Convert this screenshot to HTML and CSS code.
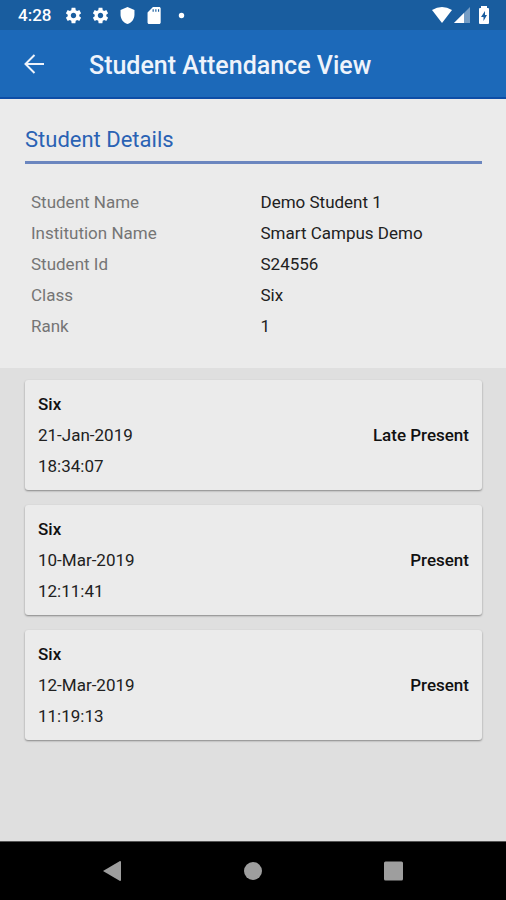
FILE: index.html
```html
<!DOCTYPE html>
<html lang="en">
<head>
<meta charset="utf-8">
<meta name="viewport" content="width=device-width, initial-scale=1">
<title>Student Attendance View</title>
<link rel="stylesheet" href="styles.css">
</head>
<body>
<div class="status-bar">
  <span class="clock">4:28</span>
  <svg class="status-icon" viewBox="1 1 22 22" aria-hidden="true"><use href="#gear"/></svg>
  <svg class="status-icon" viewBox="1 1 22 22" aria-hidden="true"><path id="gear" d="M19.43 12.98c.04-.32.07-.64.07-.98s-.03-.66-.07-.98l2.11-1.65c.19-.15.24-.42.12-.64l-2-3.46c-.12-.22-.39-.3-.61-.22l-2.49 1c-.52-.4-1.08-.73-1.69-.98l-.38-2.65C14.46 2.18 14.25 2 14 2h-4c-.25 0-.46.18-.49.42l-.38 2.65c-.61.25-1.17.59-1.69.98l-2.49-1c-.23-.09-.49 0-.61.22l-2 3.46c-.13.22-.07.49.12.64l2.11 1.65c-.04.32-.07.65-.07.98s.03.66.07.98l-2.11 1.65c-.19.15-.24.42-.12.64l2 3.46c.12.22.39.3.61.22l2.49-1c.52.4 1.08.73 1.69.98l.38 2.65c.03.24.24.42.49.42h4c.25 0 .46-.18.49-.42l.38-2.65c.61-.25 1.17-.59 1.69-.98l2.49 1c.23.09.49 0 .61-.22l2-3.46c.12-.22.07-.49-.12-.64l-2.11-1.65zM12 15.5c-1.930 0-3.500-1.570-3.500-3.500s1.570-3.500 3.500-3.500 3.500 1.570 3.500 3.500-1.570 3.500-3.500 3.500z"/></svg>
  <svg class="status-icon" viewBox="1 1 22 22" aria-hidden="true"><path d="M12 1 3 5v6c0 5.550 3.840 10.740 9 12 5.160-1.260 9-6.450 9-12V5z"/></svg>
  <svg class="status-icon" viewBox="1 1 22 22" aria-hidden="true"><path fill-rule="evenodd" d="M18 1h-8L3 8v13c0 1.100.9 2 2 2h13c1.100 0 2-.9 2-2V3c0-1.100-.9-2-2-2zM9.500 4v3h1.500V4zM13 4v3h1.500V4zM16.500 4v3H18V4z"/></svg>
  <svg class="status-icon" viewBox="1 1 22 22" aria-hidden="true"><circle cx="12" cy="12" r="3.500"/></svg>
  <div class="signals">
    <svg width="20" height="16" viewBox="0 0 20 16" aria-hidden="true"><path d="M0 3Q10-3 20 3L10 16Z"/></svg>
    <svg width="16" height="16" viewBox="0 0 16 16" aria-hidden="true"><path d="M0 16 16 0V16Z" opacity=".4"/><path d="M0 16 10 6V16Z"/></svg>
    <svg class="battery" width="12" height="18" viewBox="0 0 12 18" aria-hidden="true"><path fill-rule="evenodd" d="M3 2V0h6v2h1q1 0 1 1v14q0 1-1 1H2q-1 0-1-1V3q0-1 1-1zM7 5 3 11h2.500v4L9 9H7z"/></svg>
  </div>
</div>
<header class="app-bar">
  <button class="back" type="button" aria-label="Back">
    <svg width="20" height="20" viewBox="0 0 20 20" aria-hidden="true"><path d="M20 10H2M10.500 1 1.500 10l9 9"/></svg>
  </button>
  <h1>Student Attendance View</h1>
</header>
<main>
  <section class="details">
    <h2>Student Details</h2>
    <dl>
      <dt>Student Name</dt><dd>Demo Student 1</dd>
      <dt>Institution Name</dt><dd>Smart Campus Demo</dd>
      <dt>Student Id</dt><dd>S24556</dd>
      <dt>Class</dt><dd>Six</dd>
      <dt>Rank</dt><dd>1</dd>
    </dl>
  </section>
  <ul class="records">
    <li class="card">
      <div><h3>Six</h3><p>21-Jan-2019</p><p>18:34:07</p></div>
      <strong>Late Present</strong>
    </li>
    <li class="card">
      <div><h3>Six</h3><p>10-Mar-2019</p><p>12:11:41</p></div>
      <strong>Present</strong>
    </li>
    <li class="card">
      <div><h3>Six</h3><p>12-Mar-2019</p><p>11:19:13</p></div>
      <strong>Present</strong>
    </li>
  </ul>
</main>
<nav class="system-nav" aria-label="System">
  <button type="button" aria-label="Back"><svg width="20" height="22" viewBox="0 0 20 22" aria-hidden="true"><path d="M0 11 17 1q1 0 1 1v18q0 1-1 1z"/></svg></button>
  <button type="button" aria-label="Home"><svg width="20" height="20" viewBox="0 0 20 20" aria-hidden="true"><circle cx="10" cy="10" r="9"/></svg></button>
  <button type="button" aria-label="Recent apps"><svg width="20" height="20" viewBox="0 0 20 20" aria-hidden="true"><rect width="19" height="19" x="1" y=".5" rx="1.500"/></svg></button>
</nav>
</body>
</html>
```
FILE: styles.css
```css
* { box-sizing: border-box; }

body {
  margin: 0;
  min-height: 100vh;
  display: flex;
  flex-direction: column;
  background: #dfdfdf;
  color: #212121;
  font: 17px/31px Roboto, sans-serif;
}

h1, h2, h3, p, dl, dd, ul { margin: 0; padding: 0; }

button {
  padding: 0;
  border: 0;
  background: none;
}

svg { display: block; }

.status-bar {
  display: flex;
  align-items: center;
  height: 30px;
  padding: 0 16px 0 18px;
  background: #195d9f;
  color: #fff;
  fill: #fff;
}

.clock {
  margin-right: 14px;
  font-size: 17px;
  font-weight: 500;
}

.status-icon {
  width: 17px;
  height: 17px;
  margin-right: 10px;
}

.signals {
  display: flex;
  align-items: center;
  gap: 2px;
  margin-left: auto;
}

.battery { margin-left: 6px; }

.app-bar {
  display: flex;
  align-items: center;
  height: 69px;
  padding: 0 24px;
  border-bottom: 2px solid #0d4da6;
  background: #1c69b9;
  color: #eef3fb;
}

.back {
  margin-right: 45px;
  fill: none;
  stroke: #eef3fb;
  stroke-width: 2;
}

h1 {
  padding-top: 4px;
  font-size: 25px;
  font-weight: 500;
}

main { flex: 1; }

.details {
  padding: 25px 24px 26px 25px;
  background: #ebebeb;
}

h2 {
  padding-bottom: 6px;
  border-bottom: 3px solid #6b86bf;
  color: #2a62b4;
  font-size: 22px;
  font-weight: 400;
}

dl {
  display: grid;
  grid-template-columns: 1fr 1fr;
  padding: 23px 0 0 6px;
}

dt { color: #757575; }

dd { padding-left: 4px; }

.records {
  display: grid;
  gap: 15px;
  padding: 12px 24px 12px 25px;
  list-style: none;
}

.card {
  display: flex;
  align-items: center;
  justify-content: space-between;
  padding: 9px 13px 8px;
  border-radius: 3px;
  background: #ebebeb;
  box-shadow: 0 1px 2px rgba(0, 0, 0, .4);
}

h3, strong {
  color: #111;
  font-size: 17px;
  font-weight: 500;
}

.system-nav {
  display: flex;
  justify-content: center;
  gap: 120px;
  height: 59px;
  border-top: 1px solid #555;
  background: #000;
  fill: #9e9e9e;
}
```
